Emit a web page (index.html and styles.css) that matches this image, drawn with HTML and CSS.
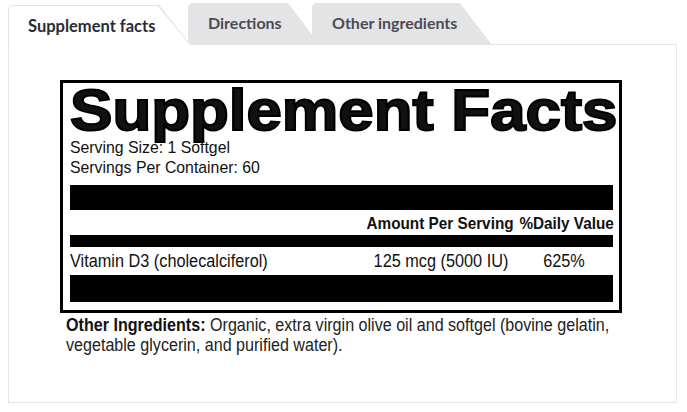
FILE: index.html
```html
<!DOCTYPE html>
<html lang="en">
<head>
  <meta charset="UTF-8">
  <meta name="viewport" content="width=device-width, initial-scale=1.0">
  <title>Supplement facts</title>
  <link rel="stylesheet" href="styles.css">
</head>
<body>
  <div class="tabs">
    <div class="tab active"><span>Supplement facts</span></div>
    <div class="tab tab-dir"><span>Directions</span></div>
    <div class="tab tab-other"><span>Other ingredients</span></div>
  </div>

  <div class="panel">
    <div class="label">
      <h1 class="label-title">Supplement Facts</h1>
      <div class="servings">
        <div class="serving">Serving Size: 1 Softgel</div>
        <div class="serving">Servings Per Container: 60</div>
      </div>
      <div class="bar bar-thick"></div>
      <div class="row head">
        <span></span>
        <span>Amount Per Serving</span>
        <span>%Daily Value</span>
      </div>
      <div class="bar bar-mid"></div>
      <div class="row item">
        <span>Vitamin D3 (cholecalciferol)</span>
        <span>125 mcg (5000 IU)</span>
        <span>625%</span>
      </div>
      <div class="bar bar-bottom"></div>
    </div>
    <p class="other"><strong>Other Ingredients:</strong> Organic, extra virgin olive oil and softgel (bovine gelatin, vegetable glycerin, and purified water).</p>
  </div>
</body>
</html>
```

FILE: styles.css
```css
* { box-sizing: border-box; }
body { margin: 0; background: #fff; font-family: Lato, "Open Sans", sans-serif; }

/* tabs */
.tabs {
  display: flex;
  align-items: flex-end;
  height: 45px;
  padding-left: 8px;
  position: relative;
  z-index: 2;
}
.tab {
  height: 42px;
  background: #e4e4e6;
  border-radius: 5px 0 0 0;
  clip-path: polygon(0 0, calc(100% - 32px) 0, 100% 100%, 0 100%);
  font-weight: 700;
  font-size: 16px;
  color: #4b4b57;
}
.tab span { display: block; padding: 10px 0 0 20px; }
.tab.active {
  height: 40px;
  width: 183px;
  background: #e2e2e2;
  padding: 1px 0 0 1px;
  z-index: 3;
  color: #2b2b38;
  font-size: 16.5px;
}
.tab.active span {
  height: 100%;
  background: #fff;
  border-radius: 4px 0 0 0;
  clip-path: polygon(0 0, calc(100% - 33px) 0, calc(100% - 1px) 100%, 0 100%);
  padding: 10px 0 0 19px;
}
.tab-dir { width: 132px; margin-left: -3px; z-index: 1; }
.tab-other { width: 180px; margin-left: -8px; z-index: 2; }

.panel {
  margin: -1px 10px 0 8px;
  height: 359px;
  border: 1px solid #e6e6e6;
  padding: 35px 0 0 51px;
}

/* label */
.label {
  width: 562px;
  border: 3px solid #000;
  padding: 2px 6px 8px 7px;
  font-family: "Liberation Sans", Arial, sans-serif;
  color: #111;
}
.label-title {
  display: inline-block;
  margin: 0;
  font-size: 57px;
  line-height: 50px;
  font-weight: 700;
  -webkit-text-stroke: 2px #000;
  white-space: nowrap;
  transform: scaleX(1.115);
  transform-origin: left center;
}
.servings { margin-top: 3px; }
.serving {
  font-size: 17px;
  line-height: 20px;
  transform: scaleX(0.93);
  transform-origin: left center;
  white-space: nowrap;
}
.bar { background: #000; }
.bar-thick { height: 25px; margin-top: 7px; }
.bar-mid { height: 12px; }
.bar-bottom { height: 27px; }
.row {
  display: grid;
  grid-template-columns: 1fr 150px 104px;
  white-space: nowrap;
}
.row span { transform-origin: center; }
.row span:nth-child(1) { transform-origin: left center; }
.row span:nth-child(2), .row span:nth-child(3) { text-align: center; }
.row.head {
  height: 25px;
  padding-top: 4px;
  font-size: 17px;
  font-weight: 700;
  line-height: 20px;
}
.row.head span { transform: scaleX(0.9); }
.row.head span:nth-child(3) { text-align: right; transform-origin: right center; }
.row.item {
  grid-template-columns: 1fr 148px 98px;
  height: 28px;
  font-size: 17.5px;
  line-height: 28px;
}
.row.item span { transform: scaleX(0.93); }

.other {
  margin: 2px 0 0 6px;
  width: 609px;
  font-family: "Liberation Sans", Arial, sans-serif;
  font-size: 17.5px;
  line-height: 20px;
  color: #222;
  transform: scaleX(0.92);
  transform-origin: left top;
}
.other strong { color: #111; }
```
